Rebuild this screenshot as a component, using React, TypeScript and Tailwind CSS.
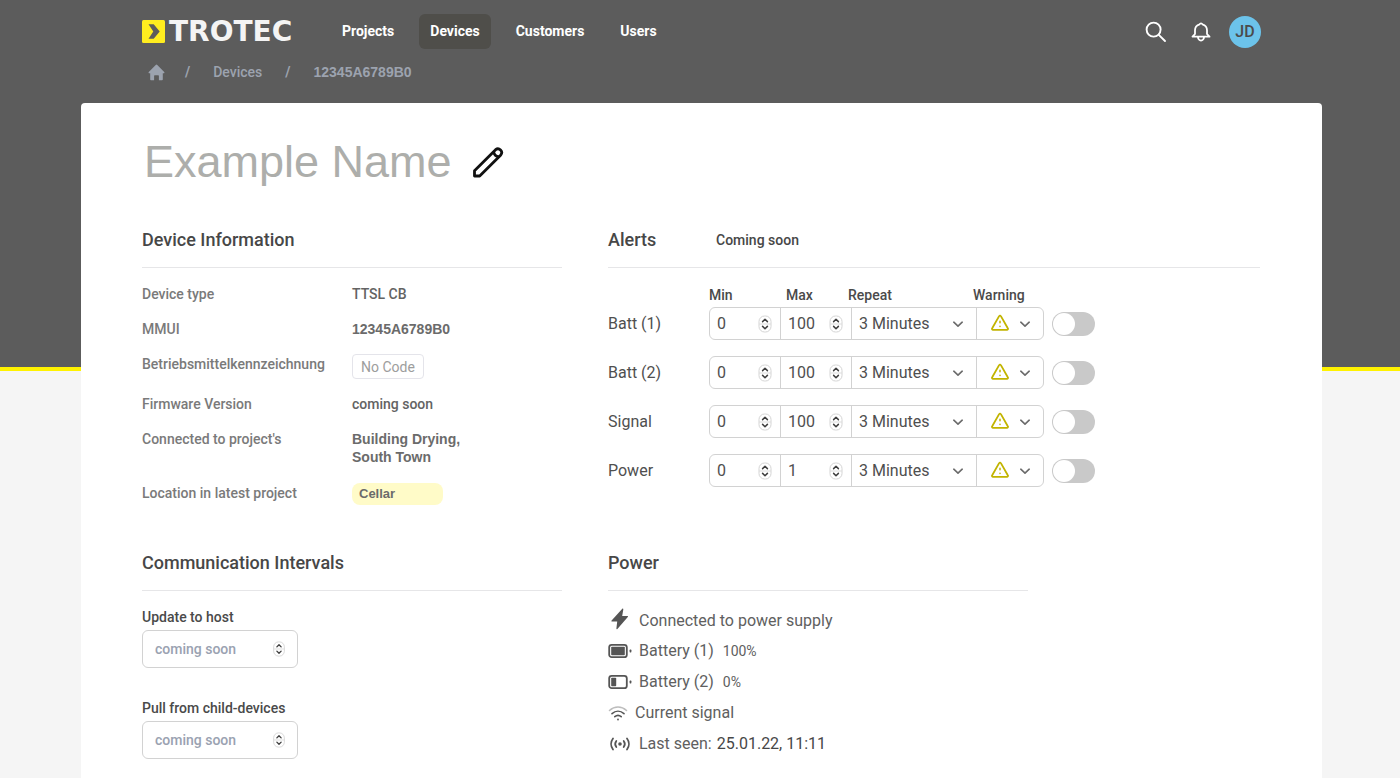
import { useState } from "react";

type AlertData = {
  label: string;
  min: number;
  max: number;
};

const alerts: AlertData[] = [
  { label: "Batt (1)", min: 0, max: 100 },
  { label: "Batt (2)", min: 0, max: 100 },
  { label: "Signal", min: 0, max: 100 },
  { label: "Power", min: 0, max: 1 },
];

const ChevronIcon = ({ className = "" }: { className?: string }) => (
  <svg
    className={"pointer-events-none h-3 w-3 text-[#6b6b6b] " + className}
    viewBox="0 0 12 12"
    fill="none"
    stroke="currentColor"
    strokeWidth="1.6"
    strokeLinecap="round"
    strokeLinejoin="round"
    aria-hidden="true"
  >
    <path d="M1.800 4.200L6 8.200l4.200-4" />
  </svg>
);

const StepperIcon = ({ className = "" }: { className?: string }) => (
  <svg
    className={"pointer-events-none absolute " + className}
    viewBox="0 0 14 18"
    fill="none"
    aria-hidden="true"
  >
    <rect x="1" y="1" width="12" height="16" rx="5.5" fill="#fff" stroke="#d4d4d4" />
    <path d="M1 9h12" stroke="#dcdcdc" />
    <path
      d="M4.6 6.6L7 4.2l2.4 2.4M4.6 11.4L7 13.8l2.4-2.4"
      stroke="#3f3f3f"
      strokeWidth="1.5"
      strokeLinecap="round"
      strokeLinejoin="round"
    />
  </svg>
);

const WarningIcon = () => (
  <svg
    className="pointer-events-none absolute left-3.5 top-1.5 h-[18px] w-[18px]"
    viewBox="0 0 18 18"
    fill="none"
    stroke="#c2b400"
    strokeWidth="1.8"
    strokeLinejoin="round"
    strokeLinecap="round"
    aria-hidden="true"
  >
    <path d="M8.1 2.1L1.2 14.2a1 1 0 00.9 1.6h13.800a1 1 0 00.9-1.600L9.900 2.100a1 1 0 00-1.800 0z" />
    <path d="M9 7.300v1.400M9 12.200v.2" strokeWidth="1.500" />
  </svg>
);

const Logo = () => (
  <a href="#" className="flex w-[166px] items-center gap-1">
    <svg className="h-[23px] w-[23px] shrink-0" viewBox="0 0 23 23" aria-hidden="true">
      <rect width="23" height="23" rx="1.5" fill="#ffed1f" />
      <path d="M6.500 4.300h5.200l6 7.200-6 7.200H6.500l4.800-7.200z" fill="#5c5c5c" />
    </svg>
    <span className="font-['DejaVu_Sans'] text-[28px] font-bold leading-6 text-[#f4f4f4]">
      TROTEC
    </span>
  </a>
);

const NavLink = ({ label, active }: { label: string; active?: boolean }) => (
  <a
    href="#"
    className={
      "rounded-md px-[11px] text-sm font-bold leading-[35px] text-white " +
      (active ? "bg-[#4f4e4a]" : "hover:bg-[#4f4e4a]")
    }
  >
    {label}
  </a>
);

const Header = () => (
  <header className="h-[371px] border-b-4 border-[#fff200] bg-[#5c5c5c] pl-[142px] pr-[139px] pt-3.5">
    <div className="flex items-center justify-between">
      <div className="flex items-center gap-[23px]">
        <Logo />
        <nav className="flex gap-3.5">
          <NavLink label="Projects" />
          <NavLink label="Devices" active />
          <NavLink label="Customers" />
          <NavLink label="Users" />
        </nav>
      </div>
      <div className="flex items-center text-white">
        <button type="button" aria-label="Search" className="mr-6">
          <svg className="h-[22px] w-[22px]" viewBox="0 0 22 22" fill="none" stroke="currentColor" strokeWidth="1.9" strokeLinecap="round">
            <circle cx="8.6" cy="8.6" r="7" />
            <path d="M13.800 13.800l6.200 6.200" />
          </svg>
        </button>
        <button type="button" aria-label="Notifications" className="mr-[18px]">
          <svg className="h-5 w-5" viewBox="0 0 20 20" fill="none" stroke="currentColor" strokeWidth="1.800" strokeLinejoin="round" strokeLinecap="round">
            <path d="M1.500 14.700h17l-2.500-2.700V8.300c0-3-1.900-5.300-4.600-6a1.500 1.500 0 00-2.800 0C5.900 3 4 5.300 4 8.300V12z" />
            <path d="M7 15a3 3.600 0 006 0" />
          </svg>
        </button>
        <button
          type="button"
          className="h-8 w-8 rounded-full bg-[#6cc3ea] text-base font-medium text-[#4b4b4b]"
        >
          JD
        </button>
      </div>
    </div>
    <nav className="mt-[13px] flex items-center text-sm font-bold leading-5 text-[#9ca3af]">
      <a href="#" aria-label="Home" className="ml-1.5">
        <svg className="h-[17px] w-[17px]" viewBox="0 0 17 17" fill="currentColor">
          <path d="M7.700.9a1.100 1.100 0 011.600 0l6.900 7.100c.6.600.2 1.300-.6 1.300h-.8v6.200c0 .5-.3.800-.8.800h-3.100v-4.400c0-.4-.2-.6-.6-.6H6.700c-.4 0-.6.2-.6.6v4.400H3c-.5 0-.8-.3-.8-.8V9.300h-.8c-.8 0-1.200-.7-.6-1.300z" />
        </svg>
      </a>
      <span className="ml-5">/</span>
      <a href="#" className="ml-[23px] font-medium">
        Devices
      </a>
      <span className="ml-[23px]">/</span>
      <a href="#" className="ml-[23px] font-['Liberation_Sans']">
        12345A6789B0
      </a>
    </nav>
  </header>
);

const SectionTitle = ({ title, note }: { title: string; note?: string }) => (
  <div className="flex items-center border-b border-[#e6e6e8] pb-[13px] text-[#474747]">
    <h2 className="w-[108px] whitespace-nowrap text-lg font-medium leading-7">{title}</h2>
    {note ? <p className="text-sm font-medium">{note}</p> : null}
  </div>
);

const DeviceInformation = () => (
  <section>
    <SectionTitle title="Device Information" />
    <dl className="mt-4 grid grid-cols-[210px_1fr] gap-y-[15px] text-sm font-medium leading-5 text-[#7a7a7a]">
      <dt>Device type</dt>
      <dd className="text-[#636363]">TTSL CB</dd>
      <dt>MMUI</dt>
      <dd className="font-['Liberation_Sans'] font-bold text-[#6b6b6b]">12345A6789B0</dd>
      <dt>Betriebsmittelkennzeichnung</dt>
      <dd>
        <button
          type="button"
          className="block h-[25px] rounded-sm border border-[#e4e4ea] px-2 font-normal text-[#9d9d9d]"
        >
          No Code
        </button>
      </dd>
      <dt>Firmware Version</dt>
      <dd className="text-[#636363]">coming soon</dd>
      <dt>Connected to project's</dt>
      <dd className="pb-0.5 pt-px font-['Liberation_Sans'] font-bold leading-[18px] text-[#6b6b6b]">
        Building Drying,
        <br />
        South Town
      </dd>
      <dt>Location in latest project</dt>
      <dd>
        <span className="block w-[91px] rounded-lg bg-[#fffbc8] px-[7px] font-['Liberation_Sans'] text-[13px] font-bold leading-[22px] text-[#6b6b6b]">
          Cellar
        </span>
      </dd>
    </dl>
  </section>
);

const NumberField = ({ label, initial }: { label: string; initial: number }) => {
  const [value, setValue] = useState(String(initial));
  return (
    <div className="relative w-[71px] border-r border-[#d2d2d2]">
      <input
        type="number"
        aria-label={label}
        value={value}
        onChange={(e) => setValue(e.target.value)}
        className="h-full w-full bg-transparent pl-[7px] pr-6 outline-none [appearance:textfield] [&::-webkit-inner-spin-button]:appearance-none"
      />
      <StepperIcon className="right-2 top-[7px] h-[18px] w-3.5" />
    </div>
  );
};

const AlertRow = ({ label, min, max }: AlertData) => {
  const [enabled, setEnabled] = useState(false);
  return (
    <li className="flex items-center text-base text-[#4f4f4f]">
      <span className="w-[101px]">{label}</span>
      <div className="flex h-[33px] w-[335px] rounded-md border border-[#d2d2d2]">
        <NumberField label={label + " min"} initial={min} />
        <NumberField label={label + " max"} initial={max} />
        <div className="relative w-[125px] border-r border-[#d2d2d2]">
          <select
            aria-label={label + " repeat"}
            className="h-full w-full appearance-none bg-transparent pl-[7px] outline-none"
          >
            <option>3 Minutes</option>
          </select>
          <ChevronIcon className="absolute right-3 top-2.5" />
        </div>
        <div className="relative flex-1">
          <select
            aria-label={label + " warning"}
            className="h-full w-full appearance-none bg-transparent outline-none"
          >
            <option value="warning" aria-label="Warning" />
          </select>
          <WarningIcon />
          <ChevronIcon className="absolute right-3 top-2.5" />
        </div>
      </div>
      <input
        type="checkbox"
        role="switch"
        aria-label={label + " alert"}
        checked={enabled}
        onChange={() => setEnabled(!enabled)}
        className="ml-2 h-6 w-[43px] cursor-pointer appearance-none rounded-full bg-[#c9c9c9] p-px before:block before:h-[22px] before:w-[22px] before:rounded-full before:bg-white checked:bg-[#bdb000] checked:before:translate-x-5"
      />
    </li>
  );
};

const Alerts = () => (
  <section>
    <SectionTitle title="Alerts" note="Coming soon" />
    <div className="mt-4 flex pl-[101px] text-sm font-medium leading-[23px] text-[#4a4a4a]">
      <span className="w-[77px]">Min</span>
      <span className="w-[62px]">Max</span>
      <span className="w-[125px]">Repeat</span>
      <span>Warning</span>
    </div>
    <ul className="flex flex-col gap-4">
      {alerts.map((alert) => (
        <AlertRow key={alert.label} {...alert} />
      ))}
    </ul>
  </section>
);

const IntervalField = ({ id, label }: { id: string; label: string }) => (
  <div>
    <label htmlFor={id} className="block text-sm font-medium leading-5 text-[#4a4a4a]">
      {label}
    </label>
    <div className="relative mt-[3px] w-[156px]">
      <input
        id={id}
        type="text"
        placeholder="coming soon"
        className="block h-[38px] w-full rounded-md border border-[#d2d2d2] pl-3 pr-8 text-sm font-medium outline-none placeholder:text-[#9aa2b1]"
      />
      <StepperIcon className="right-3 top-[11px] h-4 w-3.5" />
    </div>
  </div>
);

const CommunicationIntervals = () => (
  <section>
    <SectionTitle title="Communication Intervals" />
    <div className="mt-4 flex flex-col gap-[30px]">
      <IntervalField id="update-host" label="Update to host" />
      <IntervalField id="pull-child" label="Pull from child-devices" />
    </div>
  </section>
);

const BatteryIcon = ({ full }: { full?: boolean }) => (
  <svg className="h-4 w-6" viewBox="0 0 24 16" fill="none" aria-hidden="true">
    <rect x="1.2" y="1.8" width="17.6" height="12.4" rx="2.5" stroke="#555" strokeWidth="1.8" />
    <rect x="3.2" y="3.8" width={full ? 13.6 : 5} height="8.4" rx="0.8" fill="#555" />
    <rect x="21.6" y="6.6" width="1.8" height="2.8" rx="0.6" fill="#555" />
  </svg>
);

const Power = () => (
  <section className="max-w-[420px]">
    <SectionTitle title="Power" />
    <ul className="mt-4 text-base text-[#606060]">
      <li className="flex h-7 items-center">
        <span className="w-[31px]">
          <svg className="mb-1 h-6 w-6" viewBox="0 0 24 24" fill="#555" aria-hidden="true">
            <path d="M14.300 1.800L3.600 13.600c-.4.500-.2 1 .4 1h5.200L8.400 21.600c-.1.800.5 1 1 .5l10.400-12c.4-.5.2-1-.4-1h-5.200l1.100-6.700c.1-.8-.5-1.100-1-.6z" />
          </svg>
        </span>
        Connected to power supply
      </li>
      <li className="flex h-[31px] items-center">
        <span className="w-[31px]">
          <BatteryIcon full />
        </span>
        Battery (1)
        <span className="ml-[9px] text-sm">100%</span>
      </li>
      <li className="flex h-[31px] items-center">
        <span className="w-[31px]">
          <BatteryIcon />
        </span>
        Battery (2)
        <span className="ml-[9px] text-sm">0%</span>
      </li>
      <li className="flex h-[31px] items-center">
        <span className="w-[27px]">
          <svg className="h-5 w-5" viewBox="0 0 20 20" fill="none" strokeWidth="1.6" strokeLinecap="round" aria-hidden="true">
            <path d="M1.500 7.500c5-4.600 12-4.600 17 0" stroke="#bdbdbd" />
            <path d="M4 10.700c3.600-3.200 8.400-3.200 12 0M6.800 13.700c2-1.700 4.400-1.700 6.400 0" stroke="#555" />
            <circle cx="10" cy="16.500" r="0.9" fill="#555" />
          </svg>
        </span>
        Current signal
      </li>
      <li className="flex h-[31px] items-center">
        <span className="w-[31px]">
          <svg className="h-6 w-6" viewBox="0 0 24 24" fill="none" stroke="#555" strokeWidth="1.8" strokeLinecap="round" aria-hidden="true">
            <path d="M5 6.500a9 9 0 000 11M19 6.500a9 9 0 010 11M8.300 9a5 5 0 000 6M15.700 9a5 5 0 010 6" />
            <circle cx="12" cy="12" r="1.800" fill="#555" stroke="none" />
          </svg>
        </span>
        Last seen:
        <time dateTime="2022-01-25T11:11" className="ml-[5px] text-[#474747]">
          25.01.22, 11:11
        </time>
      </li>
    </ul>
  </section>
);

const App = () => (
  <div className="flex min-h-screen flex-col bg-[#f5f5f5] font-[Roboto,sans-serif]">
    <Header />
    <main className="-mt-[268px] ml-[81px] mr-[78px] flex-1 rounded-t bg-white pl-[61px] pr-[62px] pt-[35px]">
      <div className="flex items-center gap-5 pl-0.5">
        <h1 className="font-['Liberation_Sans'] text-[45px] leading-[48px] text-[#adaeab]">
          Example Name
        </h1>
        <button type="button" aria-label="Edit name">
          <svg className="h-8 w-8" viewBox="0 0 32 32" fill="none" stroke="#111" strokeWidth="2.8" strokeLinejoin="round">
            <path d="M2.500 30v-5.200L23.600 3.700a3.700 3.700 0 015.200 5.200L7.700 30zM21.600 5.800c.4 2.600 2.400 4.700 5.200 5.100" />
          </svg>
        </button>
      </div>
      <div className="mt-10 grid grid-cols-[420px_1fr] gap-x-[46px] gap-y-11">
        <DeviceInformation />
        <Alerts />
        <CommunicationIntervals />
        <Power />
      </div>
    </main>
  </div>
);

export default App;
